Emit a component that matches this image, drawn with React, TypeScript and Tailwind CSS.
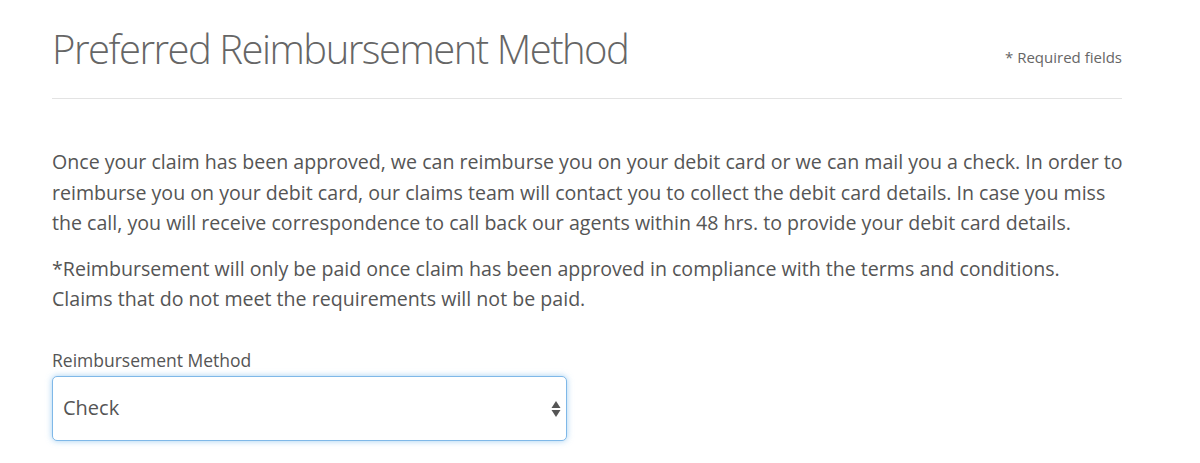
export default function App() {
  return (
    <div className="min-h-screen bg-white px-[52px] pt-[22px] text-[#555]" style={{ fontFamily: '"Open Sans", "Liberation Sans", sans-serif' }}>
      <div className="flex w-[1070px] items-end justify-between border-b border-[#e3e3e3] pb-[22px]">
        <h1 className="text-[40px] font-light leading-[54px] tracking-[-1.5px] text-[#666]">Preferred Reimbursement Method</h1>
        <span className="mb-[8px] text-[15px] text-[#666]">* Required fields</span>
      </div>

      <div className="w-[1090px] pt-[48px] text-[19.6px] leading-[30.5px]">
        <p>
          Once your claim has been approved, we can reimburse you on your debit card or we can mail you a check. In order to
          <br />
          reimburse you on your debit card, our claims team will contact you to collect the debit card details. In case you miss
          <br />
          the call, you will receive correspondence to call back our agents within 48 hrs. to provide your debit card details.
        </p>
        <p className="mt-[15px]">
          *Reimbursement will only be paid once claim has been approved in compliance with the terms and conditions.
          <br />
          Claims that do not meet the requirements will not be paid.
        </p>
      </div>

      <div className="mt-[34px]">
        <label className="block text-[17.5px] leading-[22px]">Reimbursement Method</label>
        <div className="relative mt-[5px] w-[515px]">
          <select className="h-[65px] w-full appearance-none rounded-[5px] border border-[#7fb8e8] bg-white px-[10px] text-[20px] text-[#555] shadow-[0_0_6px_rgba(102,175,233,0.6)] outline-none">
            <option>Check</option>
            <option>Debit Card</option>
          </select>
          <svg className="pointer-events-none absolute right-[6px] top-[24px]" width="10" height="18" viewBox="0 0 10 18">
            <path d="M5 1 L9.5 8 H0.5 Z" fill="#555" />
            <path d="M0.5 10 H9.5 L5 17 Z" fill="#555" />
          </svg>
        </div>
      </div>
    </div>
  );
}
